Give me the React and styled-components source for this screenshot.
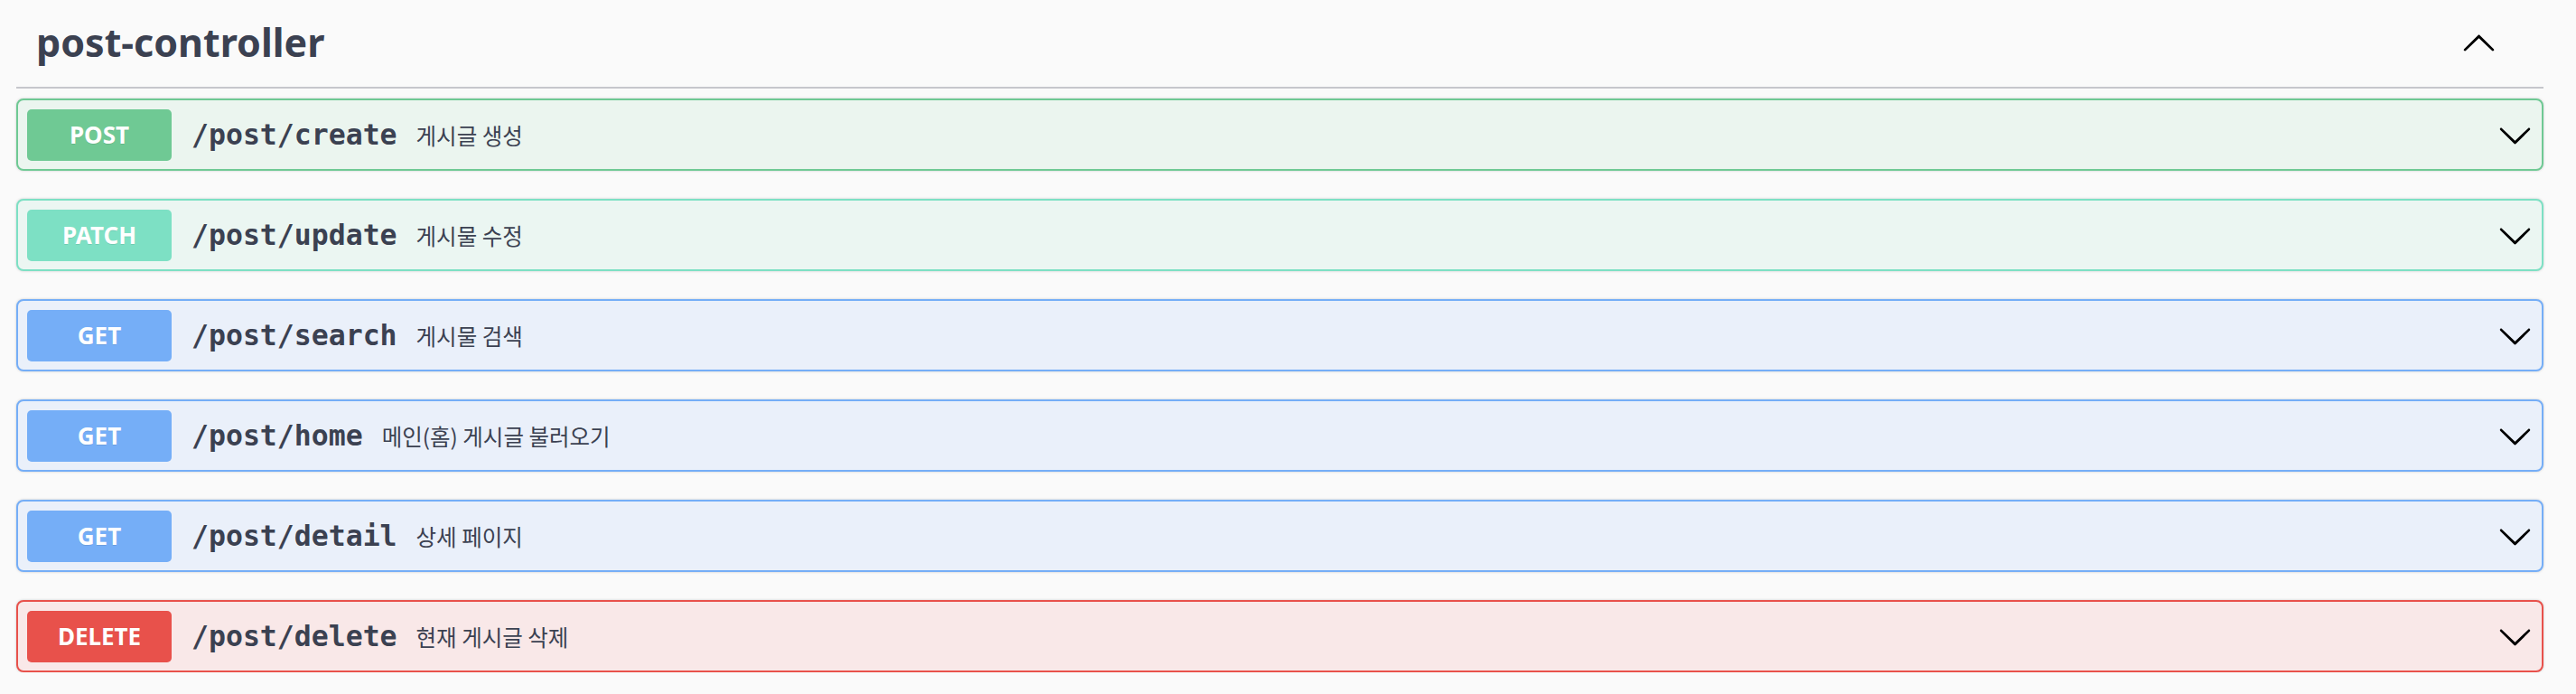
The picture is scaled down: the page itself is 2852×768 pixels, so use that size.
import React from "react";
import styled, { createGlobalStyle } from "styled-components";

const GlobalStyle = createGlobalStyle`
  html, body {
    margin: 0;
    padding: 0;
    background: #fafafa;
  }
`;

const METHODS = {
  POST: { main: "#6fc994", bg: "#ebf5ef" },
  PATCH: { main: "#7de0c4", bg: "#ebf6f2" },
  GET: { main: "#75aef7", bg: "#eaf0fa" },
  DELETE: { main: "#e8514b", bg: "#f9e8e8" },
};

const endpoints = [
  { method: "POST", path: "/post/create", desc: "게시글 생성" },
  { method: "PATCH", path: "/post/update", desc: "게시물 수정" },
  { method: "GET", path: "/post/search", desc: "게시물 검색" },
  { method: "GET", path: "/post/home", desc: "메인(홈) 게시글 불러오기" },
  { method: "GET", path: "/post/detail", desc: "상세 페이지" },
  { method: "DELETE", path: "/post/delete", desc: "현재 게시글 삭제" },
];

const ChevronDown = () => (
  <svg width="39" height="39" viewBox="0 0 20 20" fill="#000">
    <path d="M17.418 6.109c.272-.268.709-.268.979 0s.271.701 0 .969l-7.908 7.83c-.27.268-.707.268-.979 0l-7.908-7.83c-.27-.268-.27-.701 0-.969.271-.268.709-.268.979 0L10 13.25l7.418-7.141z" />
  </svg>
);

const ChevronUp = () => (
  <svg width="39" height="39" viewBox="0 0 20 20" fill="#000">
    <path d="M17.418 14.908c.272.268.709.268.979 0s.271-.701 0-.969l-7.908-7.83c-.27-.268-.707-.268-.979 0l-7.908 7.83c-.27.268-.27.701 0 .969.271.268.709.268.979 0L10 7.767l7.418 7.141z" />
  </svg>
);

const App = () => {
  return (
    <Wrapper>
      <GlobalStyle />
      <TagHeader>
        <TagTitle>post-controller</TagTitle>
        <ToggleButton>
          <ChevronUp />
        </ToggleButton>
      </TagHeader>
      <List>
        {endpoints.map((ep) => (
          <OpBlock key={ep.path} $color={METHODS[ep.method]}>
            <MethodBadge $color={METHODS[ep.method]}>{ep.method}</MethodBadge>
            <Path>{ep.path}</Path>
            <Description>{ep.desc}</Description>
            <ExpandIcon>
              <ChevronDown />
            </ExpandIcon>
          </OpBlock>
        ))}
      </List>
    </Wrapper>
  );
};

const Wrapper = styled.div`
  padding: 0 36px 0 18px;
  color: #3b4151;
`;

const TagHeader = styled.div`
  display: flex;
  align-items: center;
  height: 98px;
  box-sizing: border-box;
  padding: 0 52px 4px 22px;
  border-bottom: 2px solid #c6c7cc;
`;

const TagTitle = styled.h3`
  flex: 1;
  margin: 0;
  font-family: "Noto Sans", "Open Sans", sans-serif;
  font-weight: 700;
  font-size: 43px;
  color: #3b4151;
`;

const ToggleButton = styled.div`
  display: flex;
  align-items: center;
`;

const List = styled.div`
  display: flex;
  flex-direction: column;
  gap: 31px;
  padding-top: 11px;
`;

const OpBlock = styled.div`
  display: flex;
  align-items: center;
  height: 80px;
  box-sizing: border-box;
  padding: 0 10px;
  border: 2px solid ${(p) => p.$color.main};
  border-radius: 8px;
  background: ${(p) => p.$color.bg};
  box-shadow: 0 0 3px rgba(0, 0, 0, 0.19);
`;

const MethodBadge = styled.span`
  display: flex;
  align-items: center;
  justify-content: center;
  width: 160px;
  height: 57px;
  border-radius: 5px;
  background: ${(p) => p.$color.main};
  color: #fff;
  font-family: "Noto Sans", "Open Sans", sans-serif;
  font-weight: 700;
  font-size: 26px;
  text-shadow: 0 1px 0 rgba(0, 0, 0, 0.1);
`;

const Path = styled.span`
  margin-left: 22px;
  font-family: "DejaVu Sans Mono", monospace;
  font-weight: 700;
  font-size: 31.5px;
  color: #3b4151;
`;

const Description = styled.span`
  flex: 1;
  margin-left: 21px;
  font-family: "Noto Sans CJK KR", "Noto Sans", sans-serif;
  font-size: 24.5px;
  color: #3b4151;
`;

const ExpandIcon = styled.span`
  display: flex;
  align-items: center;
`;

export default App;
